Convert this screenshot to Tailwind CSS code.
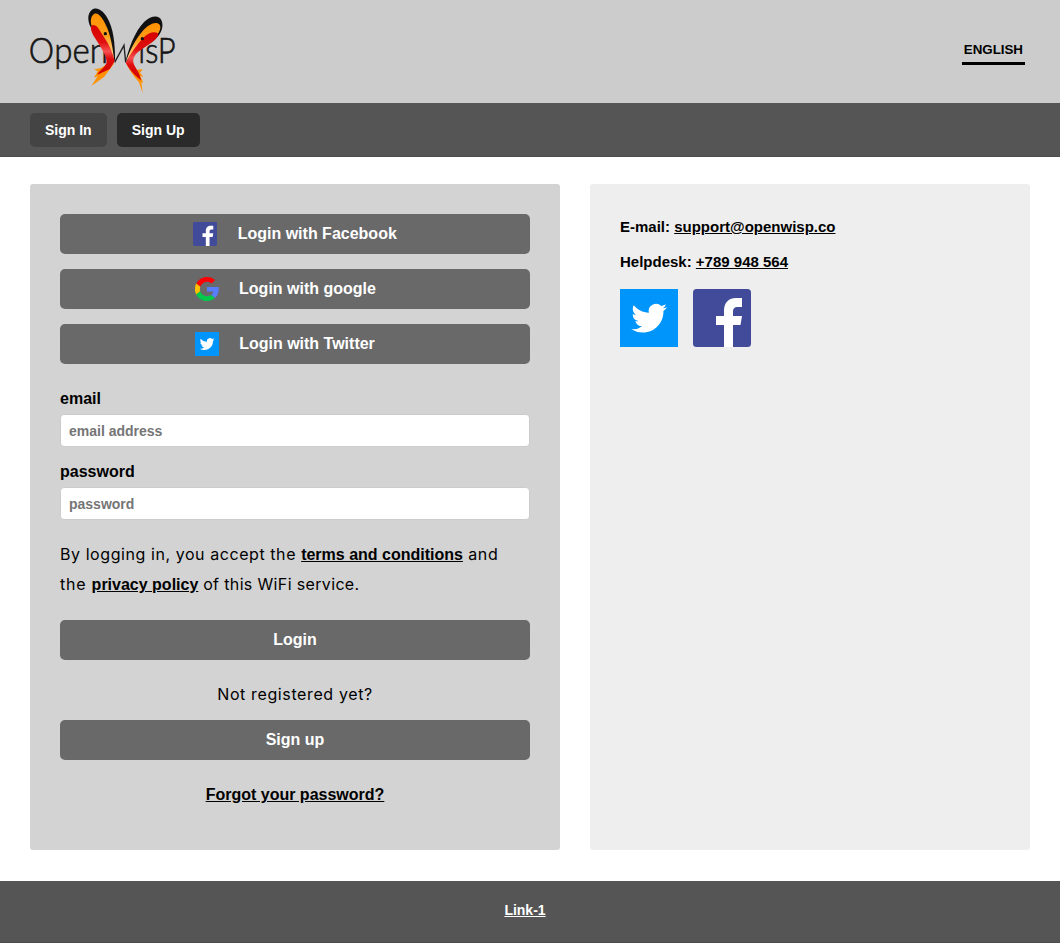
<!DOCTYPE html>
<html lang="en">
<head>
<meta charset="utf-8">
<title>OpenWISP</title>
<script src="https://cdn.jsdelivr.net/npm/@tailwindcss/browser@4"></script>
</head>
<body class="bg-white font-['Liberation_Sans',Arial,sans-serif] text-base font-bold text-black">
<svg class="hidden">
  <symbol id="fb" viewBox="0 0 58 58"><rect width="58" height="58" rx="3.500" fill="#414b99"/><path fill="#fff" d="M31 58V36h-8v-9h8v-5C31 13 36 9 43 9h6v9h-4c-4 0-5 2-5 5v4h9l-1.500 9H40v22z"/></symbol>
  <symbol id="tw" viewBox="0 0 58 58"><rect width="58" height="58" fill="#0095fa"/><path fill="#fff" transform="translate(11.300 11.500) scale(1.490 1.470)" d="M23.953 4.570a10 10 0 01-2.825.775 4.958 4.958 0 002.163-2.723c-.951.555-2.005.959-3.127 1.184a4.920 4.920 0 00-8.384 4.482C7.690 8.095 4.067 6.130 1.640 3.162a4.822 4.822 0 00-.666 2.475c0 1.710.870 3.213 2.188 4.096a4.904 4.904 0 01-2.228-.616v.060a4.923 4.923 0 003.946 4.827 4.996 4.996 0 01-2.212.085 4.936 4.936 0 004.604 3.417 9.867 9.867 0 01-6.102 2.105c-.390 0-.779-.023-1.170-.067a13.995 13.995 0 007.557 2.209c9.053 0 13.998-7.496 13.998-13.985 0-.210 0-.420-.015-.630A9.935 9.935 0 0024 4.590z"/></symbol>
</svg>

<header class="flex h-[103px] items-start justify-between bg-[#ccc] pr-[35px] pl-[30px]">
  <svg class="h-[95px] w-[145px] overflow-visible" viewBox="-150 0 435 285" role="img" aria-label="OpenWISP">
    <defs>
      <linearGradient id="o" x1="0" y1="0" x2="0" y2="1"><stop offset="0" stop-color="#ff9000"/><stop offset=".45" stop-color="#ffa01c"/><stop offset="1" stop-color="#ffe0a0"/></linearGradient>
      <linearGradient id="r" x1="0" y1="0" x2="0" y2="1"><stop offset="0" stop-color="#d60000"/><stop offset=".35" stop-color="#e01010"/><stop offset=".53" stop-color="#f65050"/><stop offset=".68" stop-color="#e00c0c"/><stop offset="1" stop-color="#cf0000"/></linearGradient>
    </defs>
    <g fill="#151515" stroke="#151515" stroke-width="2" font-family="Lato, sans-serif" font-weight="300" font-size="108">
      <text x="-154" y="188" textLength="76" lengthAdjust="spacingAndGlyphs">O</text>
      <text x="-77" y="188" textLength="161" lengthAdjust="spacingAndGlyphs">pen</text>
      <text x="175" y="188" textLength="112" lengthAdjust="spacingAndGlyphs">isP</text>
    </g>
    <path d="M104 187L132 136L137 187" fill="none" stroke="#222" stroke-width="4"/>
    <path fill="#111" d="M105 186C91 148 61 121 39 92C22 70 20 42 35 30C51 18 68 32 80 50C100 82 106 130 105 186Z"/>
    <path fill="url(#o)" d="M103 185C91 148 61 121 39 88C30 70 30 50 42 42C55 35 69 57 77 74C92 103 99 145 103 185Z"/>
    <path fill="#ff9000" d="M79 192C69 203 58 207 43 208L53 214L42 233L53 229L34 258L72 231L103 190Z"/>
    <path fill="url(#r)" d="M34 77C43 71 53 79 60 92C72 113 94 137 104 184L89 207C77 213 64 219 52 224C60 209 77 202 80 187C79 163 61 140 45 114C37 102 30 86 34 77Z"/>
    <circle cx="76" cy="101" r="5" fill="#111"/>
    <path fill="#111" d="M136 187C145 148 164 94 193 65C213 46 237 44 244 60C254 82 241 106 221 122C187 146 156 160 136 187Z"/>
    <path fill="url(#o)" d="M138 184C151 148 168 116 188 93C206 72 229 62 239 74C246 85 235 104 218 118C185 143 157 157 138 184Z"/>
    <path fill="#ff9000" d="M139 190C149 213 162 230 177 247L188 279L184 246L190 248L181 228L190 230L180 218L188 208L169 209L158 191Z"/>
    <path fill="url(#r)" d="M137 188C151 160 169 136 190 113C209 93 232 94 235 103C233 119 207 133 190 145C169 158 157 173 160 187C163 203 180 216 183 241C168 228 151 214 137 188Z"/>
    <circle cx="187" cy="116" r="5" fill="#111"/>
  </svg>
  <button class="mt-[38px] h-[27px] border-b-[3px] border-black px-[2px] text-[13.333px] leading-[22px] font-bold">ENGLISH</button>
</header>

<nav class="flex h-[54px] gap-[10px] border-b border-[#4c4c4c] bg-[#555] px-[30px] pt-[10px] text-sm leading-[34px] text-white">
  <a class="h-[34px] rounded-[5px] bg-[#444] px-[15px]">Sign In</a>
  <a class="h-[34px] rounded-[5px] bg-[#2a2a2a] px-[15px]">Sign Up</a>
</nav>

<main class="flex h-[724px] gap-[30px] px-[30px] pt-[27px] pb-[31px]">
  <section class="w-[530px] rounded-[3px] bg-[#d3d3d3] p-[30px]">
    <div class="flex flex-col gap-[15px] text-white">
      <a class="flex h-10 items-center justify-center gap-[20.500px] rounded-[5px] bg-[#696969]"><svg class="size-6"><use href="#fb"/></svg><span class="-mt-px">Login with Facebook</span></a>
      <a class="flex h-10 items-center justify-center gap-[20.500px] rounded-[5px] bg-[#696969] pr-[19.500px]"><svg class="size-6" viewBox="0 0 48 48"><path fill="#ff0000" d="M24 9.500c3.500 0 6.700 1.200 9.200 3.600l6.900-6.900C35.900 2.400 30.500 0 24 0 14.600 0 6.500 5.400 2.600 13.200l8 6.200C12.400 13.700 17.700 9.500 24 9.500z"/><path fill="#587dff" d="M47.500 24.500c0-1.600-.2-3.100-.4-4.500H24v9h12.900c-.6 3-2.200 5.500-4.700 7.200l7.700 6c4.500-4.200 7.600-10.400 7.600-17.700z"/><path fill="#ffc000" d="M10.500 28.600a14.500 14.500 0 010-9.200l-8-6.200a24 24 0 000 21.600z"/><path fill="#00c84a" d="M24 48c6.500 0 11.900-2.100 15.900-5.800l-7.700-6c-2.200 1.400-4.900 2.300-8.200 2.300-6.300 0-11.600-4.200-13.500-9.900l-8 6.200C6.500 42.600 14.600 48 24 48z"/></svg><span class="-mt-px">Login with google</span></a>
      <a class="flex h-10 items-center justify-center gap-5 rounded-[5px] bg-[#696969] pr-[20px]"><svg class="size-6"><use href="#tw"/></svg><span class="-mt-px">Login with Twitter</span></a>
    </div>
    <label class="mt-[26px] block leading-[18px]" for="email">email</label>
    <input id="email" class="mt-[6px] block h-[33px] w-full rounded-[4px] border border-[#ccc] bg-white px-2 text-sm font-bold placeholder:text-[#757575]" placeholder="email address">
    <label class="mt-[16px] block leading-[18px]" for="password">password</label>
    <input id="password" class="mt-[6px] block h-[33px] w-full rounded-[4px] border border-[#ccc] bg-white px-2 text-sm font-bold placeholder:text-[#757575]" placeholder="password">
    <div class="mt-[19px] leading-[30px] font-normal whitespace-nowrap">
      <p class="h-[30px]"><span class="font-[Inter] tracking-[0.570px]">By logging in, you accept the </span><a class="font-bold underline">terms and conditions</a><span class="font-[Inter] tracking-[0.720px]"> and</span></p>
      <p class="h-[30px]"><span class="font-[Inter] tracking-[0.770px]">the </span><a class="font-bold underline">privacy policy</a><span class="font-[Inter] tracking-[0.350px]"> of this WiFi service.</span></p>
    </div>
    <button class="mt-[21px] block h-10 w-full rounded-[5px] bg-[#696969] pb-px text-white">Login</button>
    <p class="mt-[19px] text-center font-[Inter] leading-[30px] font-normal tracking-[0.620px]">Not registered yet?</p>
    <button class="mt-[11px] block h-10 w-full rounded-[5px] bg-[#696969] pb-px text-white">Sign up</button>
    <p class="mt-[26px] text-center leading-[18px]"><a class="underline">Forgot your password?</a></p>
  </section>
  <aside class="w-[440px] rounded-[3px] bg-[#eee] p-[30px] text-[15px]">
    <p class="mt-[4px] leading-[18px]">E-mail: <a class="underline">support@openwisp.co</a></p>
    <p class="mt-[17px] leading-[18px]">Helpdesk: <a class="underline">+789 948 564</a></p>
    <div class="mt-[18px] flex gap-[15px]"><svg class="size-[58px]"><use href="#tw"/></svg><svg class="size-[58px]"><use href="#fb"/></svg></div>
  </aside>
</main>

<footer class="flex h-[62px] justify-center border-b border-[#4c4c4c] bg-[#555] pt-[20px] pr-[10px] text-sm leading-[18px] text-white"><a class="underline">Link-1</a></footer>
</body>
</html>
